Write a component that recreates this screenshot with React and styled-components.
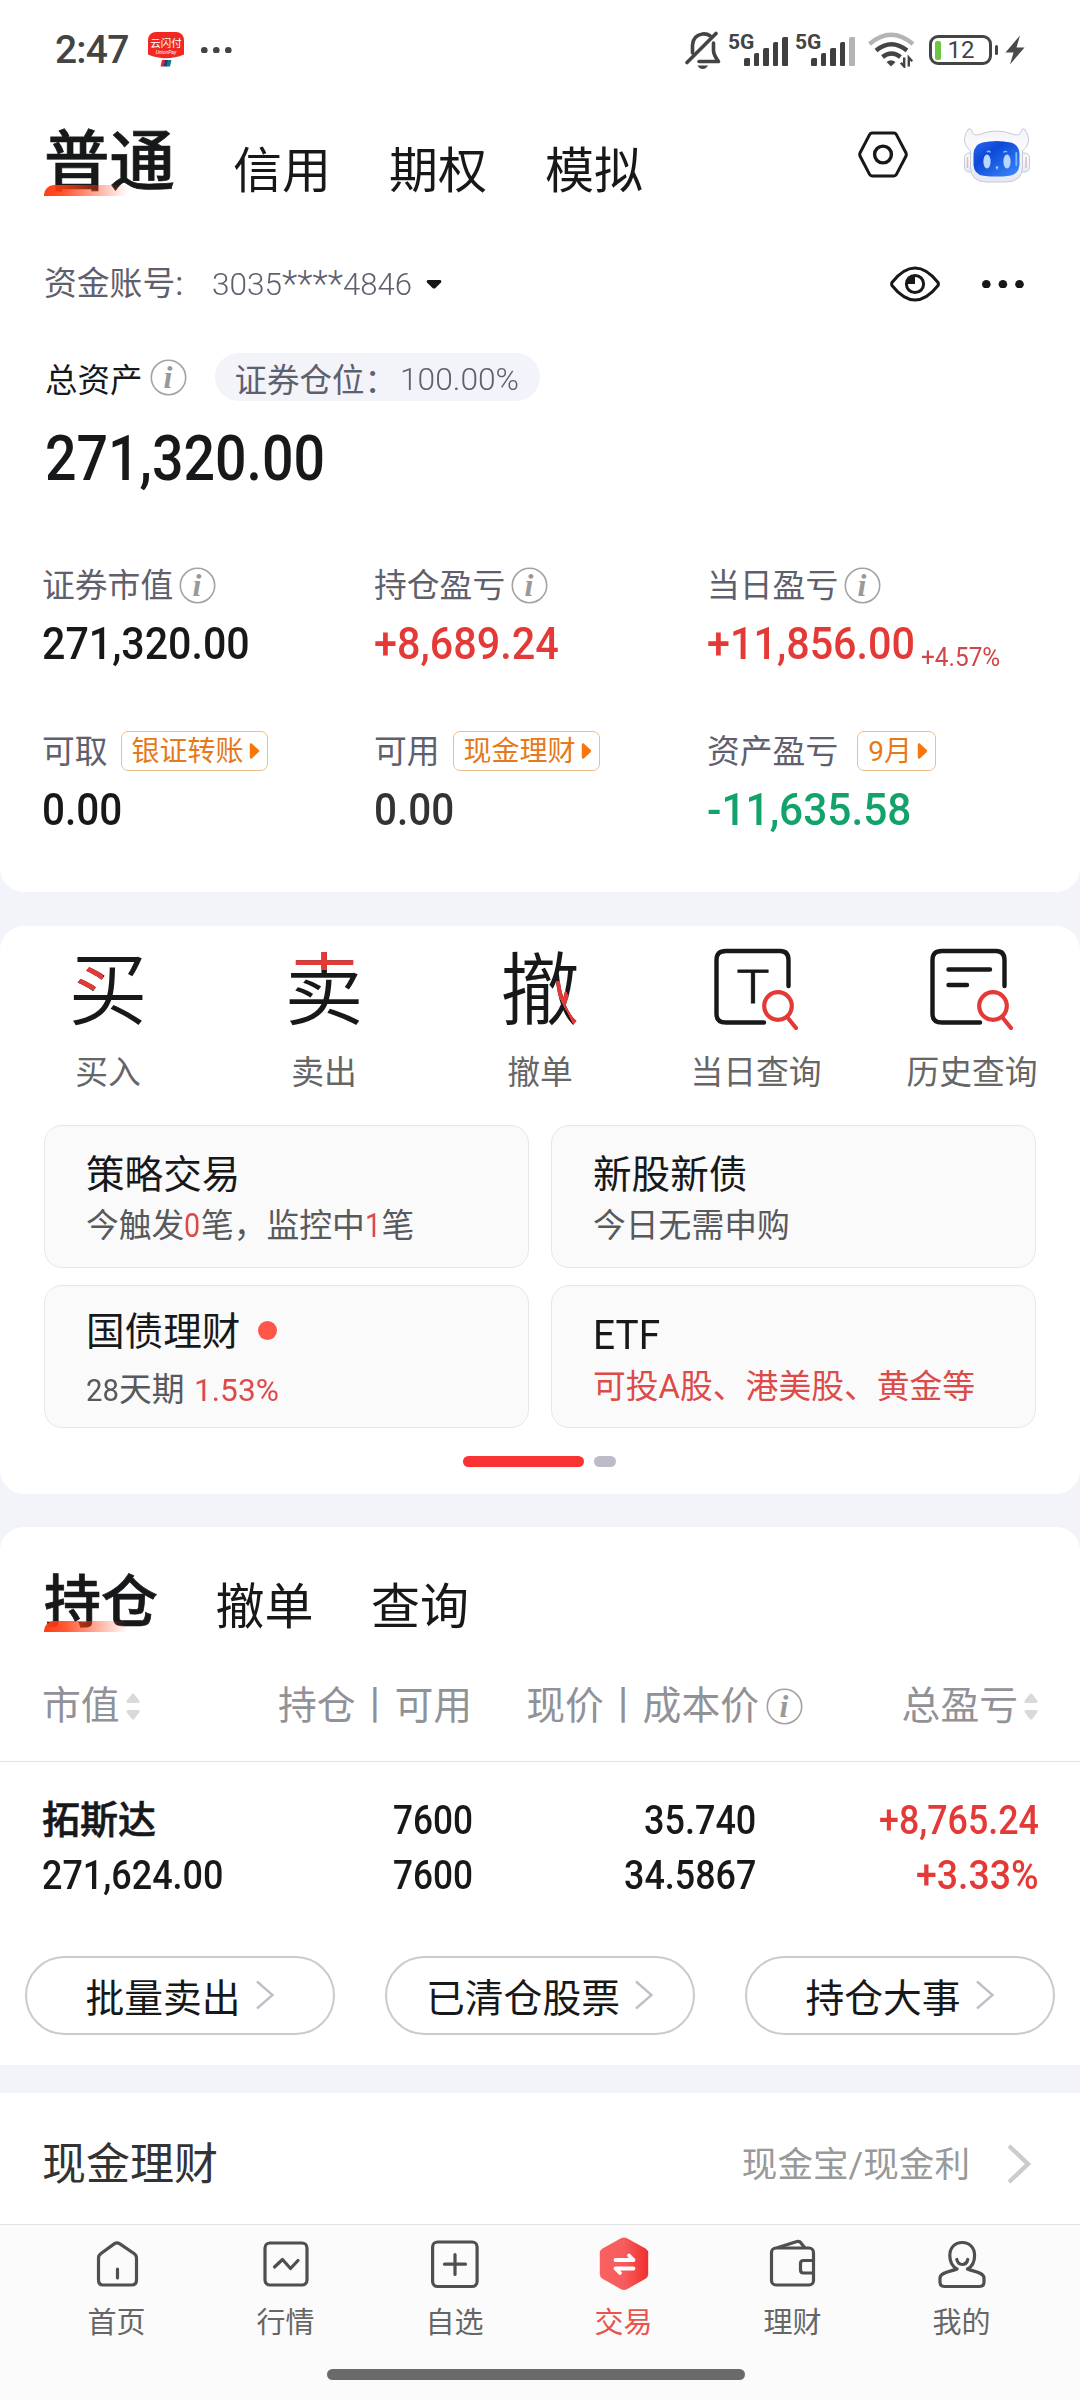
import React, { useLayoutEffect, useRef, useState } from "react";
import styled, { createGlobalStyle, css } from "styled-components";

const INK = "#17181a";
const SLATE = "#5f606e";
const RED = "#e43a37";
const GREEN = "#12a26a";
const ORANGE = "#e67a1a";

const GlobalStyle = createGlobalStyle`
  *, *::before, *::after { box-sizing: border-box; }
  body {
    margin: 0;
    background: #f3f4f9;
    font-family: Roboto, "Noto Sans CJK SC", sans-serif;
    color: ${INK};
    -webkit-font-smoothing: antialiased;
  }
  svg { display: block; flex: none; }
`;

const Screen = styled.div`
  width: 1080px;
  height: 2400px;
  overflow: hidden;
  display: flex;
  flex-direction: column;
`;

const Panel = styled.section`
  background: #fff;
  flex: none;
  height: ${(p) => p.$h}px;
  margin-top: ${(p) => p.$gap || 0}px;
  border-radius: ${(p) => p.$radius || "0"};
`;

/* ---------- condensed figures ---------- */
const FigureBox = styled.span`
  display: inline-block;
  flex: none;
  white-space: nowrap;
  font-size: ${(p) => p.$size}px;
  font-weight: ${(p) => p.$weight || 500};
  color: ${(p) => p.$color || "inherit"};
`;
const FigureInk = styled.span`
  display: inline-block;
  transform-origin: 0 50%;
`;
function Figure({ width, size, weight, color, children }) {
  const ref = useRef(null);
  const [scale, setScale] = useState(1);
  useLayoutEffect(() => {
    setScale(width / ref.current.offsetWidth);
  }, [width]);
  return (
    <FigureBox $size={size} $weight={weight} $color={color} style={{ width }}>
      <FigureInk ref={ref} style={{ transform: `scaleX(${scale})` }}>{children}</FigureInk>
    </FigureBox>
  );
}

/* ---------- status bar ---------- */
const StatusBar = styled.header`
  height: 100px;
  padding: 0 55px;
  display: flex;
  align-items: center;
  color: #444;
`;
const Clock = styled.span`
  font-size: 39px;
  font-weight: 500;
  line-height: 50px;
  width: 93px;
  letter-spacing: -0.8px;
`;
const AppBadge = styled.span`
  width: 36px;
  height: 36px;
  border-radius: 8px;
  overflow: hidden;
  flex: none;
  margin-right: 17px;
`;
const StatusIcons = styled.span`
  display: flex;
  align-items: center;
  margin-left: auto;
`;
const Signals = styled.span`
  display: flex;
  margin: 0 6px 2px 0;
`;
const SignalGroup = styled.span`
  display: flex;
  height: 34px;
  width: 67px;
`;
const NetLabel = styled.span`
  font-size: 21px;
  font-weight: 700;
  line-height: 20px;
  width: 16px;
  white-space: nowrap;
`;
const Bars = styled.span`
  display: flex;
  align-items: flex-end;
  gap: 4px;
  height: 34px;
`;
const Bar = styled.i`
  width: 5.6px;
  border-radius: 2px 1px 1px 1px;
  height: ${(p) => p.$h}px;
  background: ${(p) => (p.$dim ? "#b4b4b4" : "#3f3f3f")};
`;
const Battery = styled.span`
  width: 63px;
  height: 30px;
  border: 3px solid #444;
  border-radius: 9px;
  display: flex;
  align-items: center;
  padding-left: 3px;
  font-size: 24px;
  line-height: 24px;
  margin-left: 14px;
`;
const Charge = styled.i`
  width: 5.5px;
  height: 19px;
  border-radius: 2px;
  background: #6cc644;
  margin-right: 7px;
`;
const Knob = styled.i`
  width: 3.5px;
  height: 10px;
  border-radius: 2px;
  background: #444;
  margin: 0 7px 0 2.5px;
`;

function Signal({ dimLast }) {
  return (
    <SignalGroup>
      <NetLabel>5G</NetLabel>
      <Bars>
        {[8, 13, 18, 24, 29].map((h, i) => (
          <Bar key={h} $h={h} $dim={dimLast && i === 4} />
        ))}
      </Bars>
    </SignalGroup>
  );
}

/* ---------- tabs ---------- */
const Tabs = styled.nav`
  display: flex;
  align-items: flex-end;
  height: ${(p) => p.$h}px;
  padding: 0 48px 0 44px;
  gap: ${(p) => p.$gap}px;
`;
const Tab = styled.span`
  font-size: 49px;
  line-height: 49px;
  position: relative;
  ${(p) => p.$active && css`
    font-size: ${p.$active}px;
    line-height: ${p.$active}px;
    padding-bottom: 1px;
    font-weight: 500;
    -webkit-text-stroke: 0.7px ${INK};
    &::after {
      content: "";
      position: absolute;
      left: 0;
      bottom: 0;
      width: 84px;
      height: 11px;
      border-top-left-radius: 10px;
      background: linear-gradient(90deg, #ff3c11 0%, rgba(255, 60, 17, 0.85) 25%, rgba(255, 60, 17, 0) 100%);
    }
  `}
`;
const TabTools = styled.div`
  display: flex;
  align-items: center;
  height: 83px;
  gap: 56px;
  margin-left: auto;
`;

/* ---------- account ---------- */
const AccountRow = styled.div`
  display: flex;
  align-items: center;
  height: 60px;
  line-height: 40px;
  margin-top: 58px;
  padding: 0 56px 0 44px;
  font-size: 32.8px;
  color: ${SLATE};
`;
const AccountLabel = styled.span`
  width: 168px;
`;
const Caret = styled.span`
  margin-left: 14px;
  flex: 1;
`;
const More = styled.span`
  margin-left: 42px;
`;
const TotalRow = styled.div`
  display: flex;
  align-items: center;
  height: 48px;
  margin-top: 39px;
  padding-left: 45px;
  font-size: 32.5px;
`;
const PositionPill = styled.span`
  display: flex;
  align-items: center;
  height: 48px;
  width: 325px;
  margin-left: 28px;
  padding-left: 20px;
  border-radius: 24px;
  background: #f3f4f9;
  color: ${SLATE};
`;
const PillLabel = styled.span`
  width: 165px;
`;
const PillFigure = styled.span`
  padding-top: 3px;
`;
const TotalValue = styled.div`
  margin: 26px 0 0 45px;
  line-height: 64px;
  height: 64px;
`;
const Stats = styled.div`
  display: grid;
  grid-template-columns: 332px 333px 1fr;
  row-gap: 65px;
  margin-top: 74px;
  padding-left: 42px;
`;
const StatLabel = styled.div`
  display: flex;
  align-items: center;
  height: 40px;
  line-height: 37px;
  font-size: 32.8px;
  color: ${SLATE};
`;
const StatName = styled.span`
  padding-top: 3px;
`;
const StatValue = styled.div`
  display: flex;
  height: 46px;
  line-height: 49px;
  margin-top: 15px;
`;
const Change = styled.span`
  line-height: 75px;
  margin-left: 6px;
`;
const LinkTag = styled.span`
  display: flex;
  align-items: center;
  height: 40px;
  margin-left: ${(p) => p.$gap || 13}px;
  padding: 0 7px 0 10px;
  border: 1.5px solid #e8c08a;
  border-radius: 7px;
  color: ${ORANGE};
  font-size: 28px;
  gap: 5px;
`;
const TagText = styled.span`
  line-height: 36px;
  padding-top: 2px;
`;
const InfoHolder = styled.span`
  margin-left: ${(p) => p.$gap}px;
`;

/* ---------- actions ---------- */
const Actions = styled.div`
  display: grid;
  grid-template-columns: repeat(5, 1fr);
  padding-top: 22px;
`;
const Action = styled.div`
  display: flex;
  flex-direction: column;
  align-items: center;
`;
const ActionIcon = styled.div`
  height: 80px;
`;
const ActionLabel = styled.div`
  margin-top: 25px;
  line-height: 41px;
  height: 40px;
  font-size: 32.8px;
  color: #666;
`;
const markPaint = {
  buy: css`
    background: linear-gradient(${RED}, ${RED}) 3px 15px / 31px 27px no-repeat, linear-gradient(${INK}, ${INK});
  `,
  sell: css`
    background: linear-gradient(${RED}, ${RED}) 0 0 / 79px 22px no-repeat, linear-gradient(${INK}, ${INK});
  `,
  cancel: css`
    background: linear-gradient(to top right, transparent 38%, ${RED} 38%, ${RED} 60%, transparent 60%) 55px 33px / 24px 45px no-repeat, linear-gradient(${INK}, ${INK});
  `,
};
const Mark = styled.span`
  display: block;
  font-family: "Noto Sans CJK SC", sans-serif;
  font-weight: 350;
  font-size: 79px;
  line-height: 74px;
  height: 80px;
  ${(p) => markPaint[p.$kind]}
  -webkit-background-clip: text;
  background-clip: text;
  color: transparent;
`;

const Cards = styled.div`
  display: grid;
  grid-template-columns: 485px 485px;
  grid-auto-rows: 143px;
  gap: 17px 22px;
  margin: 32px 44px 0;
`;
const Card = styled.div`
  border: 1px solid #e6e7eb;
  border-radius: 18px;
  background: #fafafa;
  padding: ${(p) => p.$top || 26}px 0 0 41px;
`;
const CardTitle = styled.div`
  display: flex;
  align-items: center;
  font-size: 38.6px;
  line-height: 46px;
  height: 46px;
`;
const CardNote = styled.div`
  margin-top: ${(p) => p.$gap || 10}px;
  font-size: 32.8px;
  line-height: 36px;
  height: 36px;
  color: ${(p) => (p.$red ? "#dc4b48" : "#58595c")};
`;
const Rate = styled.span`
  margin-left: 9px;
`;
const Dot = styled.i`
  width: 19px;
  height: 19px;
  border-radius: 50%;
  background: #fe5649;
  margin: -3px 0 0 17.5px;
`;
const Pager = styled.div`
  display: flex;
  justify-content: center;
  gap: 10px;
  margin: 28px 2px 0 0;
`;
const Page = styled.i`
  width: ${(p) => (p.$on ? 121 : 22)}px;
  height: 11px;
  border-radius: 6px;
  background: ${(p) => (p.$on ? "#f93232" : "#bcbcc8")};
`;

/* ---------- holdings ---------- */
const tableGrid = css`
  display: grid;
  grid-template-columns: 231px 200px 330px 236px;
  padding-left: 42px;
`;
const TableHead = styled.div`
  ${tableGrid}
  height: 130px;
  padding-top: 48px;
  padding-bottom: 29px;
  border-bottom: 1.5px solid #e4e4e6;
  color: #919198;
  font-size: 38.8px;
  line-height: 48px;
`;
const Cell = styled.div`
  display: flex;
  align-items: center;
  justify-content: ${(p) => (p.$left ? "flex-start" : "flex-end")};
  padding-right: ${(p) => p.$inset || 0}px;
  white-space: nowrap;
`;
const TableLine = styled.div`
  ${tableGrid}
  height: 55px;
  line-height: 55px;
`;
const TableBody = styled.div`
  padding-top: 31px;
`;
const StockName = styled.span`
  font-size: 38px;
  font-weight: 500;
  -webkit-text-stroke: 0.6px ${INK};
`;
const SortHolder = styled.span`
  margin-left: 5px;
`;
const PillRow = styled.div`
  display: flex;
  gap: 50px;
  padding: 53px 25px 0;
`;
const PillButton = styled.button`
  flex: 1;
  height: 79px;
  border: 2px solid #cacad0;
  border-radius: 40px;
  background: #fff;
  font-family: inherit;
  font-size: 38.8px;
  line-height: 48px;
  color: ${INK};
  display: flex;
  align-items: center;
  justify-content: center;
  gap: 14px;
  padding: 6px 0 0;
  svg { margin-top: -8px; }
`;

/* ---------- cash row + bottom navigation ---------- */
const CashRow = styled.div`
  display: flex;
  align-items: center;
  height: 131px;
  line-height: 54px;
  padding: 10px 48px 0 42px;
`;
const CashTitle = styled.span`
  flex: 1;
  font-size: 44px;
  color: #333;
  padding-top: 2px;
`;
const CashNote = styled.span`
  font-size: 35.6px;
  color: #999;
  margin-right: 37px;
  padding-top: 2px;
`;
const BottomBar = styled.footer`
  flex: none;
  height: 176px;
  border-top: 1.5px solid #e3e3e3;
  background: #fbfbfb;
  display: flex;
  flex-direction: column;
  align-items: center;
`;
const NavItems = styled.div`
  display: grid;
  grid-template-columns: repeat(6, 169px);
  padding-top: 12px;
  margin-right: 2px;
`;
const NavItem = styled.div`
  display: flex;
  flex-direction: column;
  align-items: center;
  font-size: 29px;
  line-height: 34px;
  gap: 15px;
  color: ${(p) => (p.$on ? "#e8534d" : "#666")};
`;
const HomeBar = styled.div`
  width: 418px;
  height: 11px;
  border-radius: 6px;
  background: #6a6a6a;
  margin-top: 29px;
  margin-right: 8px;
`;

/* ---------- icons ---------- */
const UnionPay = () => (
  <svg width="36" height="36" viewBox="0 0 36 36">
    <path d="M0 0 H36 V22.5 Q18 30 0 22.5 Z" fill="#f02a22" />
    <text x="18" y="15" textAnchor="middle" fontSize="10.5" fill="#fff" fontFamily="Noto Sans CJK SC, sans-serif">云闪付</text>
    <text x="18" y="21.5" textAnchor="middle" fontSize="5" fontStyle="italic" fill="#fff" fontFamily="Roboto, sans-serif">UnionPay</text>
    <path d="M14 28 H17.5 L16 34.5 H12.5 Z" fill="#e0263c" />
    <path d="M17 28 H20.5 L19 34.5 H15.5 Z" fill="#1b3f78" />
    <path d="M20 28 H23.5 L22 34.5 H18.5 Z" fill="#0c7d84" />
  </svg>
);
const Dots = ({ step, r, color }) => (
  <svg width={step * 2 + r * 2} height={r * 2} fill={color}>
    <circle cx={r} cy={r} r={r} />
    <circle cx={r + step} cy={r} r={r} />
    <circle cx={r + step * 2} cy={r} r={r} />
  </svg>
);
const Mute = () => (
  <svg width="43" height="38" viewBox="0 0 43 38" fill="none" stroke="#444" strokeWidth="3.6" strokeLinecap="round">
    <path d="M2 31.5 L31 2.5" />
    <path d="M7.5 22 V14 Q8 4.5 17.5 3 Q22 2.5 25 4.8" />
    <path d="M28.5 12 V20 Q29 24.5 33.5 30.5 H14" strokeLinejoin="round" />
    <path d="M12.5 34.5 H23 Q21 38 17.7 38 Q14.5 38 12.5 34.5 Z" fill="#444" stroke="none" />
  </svg>
);
const Wifi = () => (
  <svg width="47" height="36" viewBox="0 0 47 36" fill="none" strokeWidth="4.4">
    <path d="M1.5 12 Q23 -6.5 45 12" stroke="#b4b4b4" />
    <path d="M8 18.5 Q23.5 6 39 18.5" stroke="#444" />
    <path d="M14.5 25 Q23.5 18 32.5 25" stroke="#444" />
    <path d="M18.5 30 Q23 26.5 27.5 30 L23 34.5 Z" fill="#444" />
    <path d="M36.2 25.5 V34.5 L32.8 30.8 M40.8 34.5 V25.5 L44.2 29.2" stroke="#444" strokeWidth="2.4" />
  </svg>
);
const Bolt = () => (
  <svg width="20" height="30" viewBox="0 0 20 30">
    <path d="M15 0.5 L0.5 17.5 H8.5 L5 29.5 L19.5 12.5 H11.5 Z" fill="#4a4a4a" />
  </svg>
);
const Hexagon = () => (
  <svg width="50" height="47" viewBox="0 0 50 47" fill="none" stroke={INK} strokeWidth="3">
    <path d="M14 2 H36 Q37.5 2 38.3 3.4 L48 22 Q48.6 23.5 48 25 L38.3 43.6 Q37.5 45 36 45 H14 Q12.5 45 11.7 43.6 L2 25 Q1.4 23.5 2 22 L11.7 3.4 Q12.5 2 14 2 Z" />
    <circle cx="25" cy="23.5" r="8.4" strokeWidth="3.4" />
  </svg>
);
const Robot = () => (
  <svg width="68" height="56" viewBox="1.5 0 68 56">
    <defs>
      <linearGradient id="face" x1="0" y1="0" x2="1" y2="1">
        <stop offset="0" stopColor="#2b66ee" />
        <stop offset="0.35" stopColor="#0d49d8" />
        <stop offset="1" stopColor="#3f8bff" />
      </linearGradient>
      <linearGradient id="shell" x1="0" y1="0" x2="0" y2="1">
        <stop offset="0" stopColor="#f1f2f7" />
        <stop offset="0.3" stopColor="#fbfbfe" />
        <stop offset="1" stopColor="#e4e8f3" />
      </linearGradient>
    </defs>
    <g fill="url(#shell)" stroke="#c6cad6" strokeWidth="1">
      <rect x="2" y="26" width="11" height="19" rx="4.5" />
      <rect x="56" y="26" width="11" height="19" rx="4.5" />
      <path d="M6 2 Q9 1 9.5 5 Q11 9 17 7.5 Q34 0.5 51 7.5 Q57 9 58.5 5 Q59 1 62 2 Q67.5 10 65.5 16 Q64 21 60 24 V40 Q60 54.5 44 55 H24 Q8 54.5 8 40 V24 Q4 21 2.5 16 Q0.5 10 6 2 Z" />
    </g>
    <path d="M5 30 V41 M63.5 30 V41" stroke="#e2bcbc" strokeWidth="1.6" />
    <path d="M20 15.5 Q34 12.5 48 15.5 Q56.5 17.5 57 27 V38 Q56 47.5 47 48.7 Q34 50.5 21 48.7 Q11.5 47.5 11 38 V27 Q11.5 17.5 20 15.5 Z" fill="url(#face)" />
    <g fill="#b9d8ff">
      <ellipse cx="24.5" cy="34.5" rx="3.6" ry="7" />
      <ellipse cx="44.5" cy="34.5" rx="3.6" ry="7" />
      <path d="M33 39.5 H36 L34.5 43 Z" />
    </g>
    <path d="M24.5 25 q2 -1.5 3.5 0.5 M41 25.5 q1.5 -2 3.5 -0.5" stroke="#8fbcff" strokeWidth="1.4" fill="none" />
    <path d="M53.8 26 V38" stroke="#7fb4ff" strokeWidth="1.8" strokeLinecap="round" />
  </svg>
);
const CaretIcon = () => (
  <svg width="16" height="10" viewBox="0 0 16 10">
    <path d="M2 1 H14 Q16 1.5 15 3.5 L9.5 9 Q8 10 6.5 9 L1 3.5 Q0 1.5 2 1 Z" fill={INK} />
  </svg>
);
const Eye = () => (
  <svg width="50" height="36" viewBox="0 0 50 36" fill="none" stroke={INK} strokeWidth="3">
    <path d="M2.2 16.2 Q13.5 2 25 2 Q36.5 2 47.8 16.2 Q49 18 47.8 19.8 Q36.5 34 25 34 Q13.5 34 2.2 19.8 Q1 18 2.2 16.2 Z" />
    <circle cx="25" cy="18" r="8.6" />
    <path d="M25 9 V18 H16 Q16.5 10 25 9 Z" fill={INK} stroke="none" />
  </svg>
);
const Info = ({ gap = 8 }) => (
  <InfoHolder $gap={gap}>
    <svg width="37" height="37" viewBox="0 0 37 37">
      <circle cx="18.5" cy="18.5" r="17.2" fill="none" stroke="#a3a3a3" strokeWidth="1.6" />
      <text x="18" y="29" textAnchor="middle" fontFamily="Liberation Serif, serif" fontStyle="italic" fontWeight="700" fontSize="32" fill="#999">i</text>
    </svg>
  </InfoHolder>
);
const TagArrow = () => (
  <svg width="11" height="18" viewBox="0 0 11 18">
    <path d="M2 2.5 L9 9 L2 15.5 Z" fill="#f9760b" stroke="#f9760b" strokeWidth="2.4" strokeLinejoin="round" />
  </svg>
);
const Sort = () => (
  <SortHolder>
    <svg width="16" height="28" viewBox="0 0 16 28">
      <path d="M8 3 L13 9.5 H3 Z M8 26 L13 19.5 H3 Z" fill="#d9d9d9" stroke="#d9d9d9" strokeWidth="3" strokeLinejoin="round" />
    </svg>
  </SortHolder>
);
const PillChevron = () => (
  <svg width="20" height="30" viewBox="0 0 20 30" fill="none" stroke="#bfbfca" strokeWidth="2.4">
    <path d="M2 1.5 L17.5 15 L2 28.5" />
  </svg>
);
const CashChevron = () => (
  <svg width="25" height="40" viewBox="0 0 25 40" fill="none" stroke="#ccc" strokeWidth="4.4">
    <path d="M2 2 L21 20 L2 38" />
  </svg>
);
const Lens = ({ x }) => (
  <g stroke={RED} strokeWidth="4.2" fill="none" strokeLinecap="round">
    <circle cx={x} cy="58" r="13.8" />
    <path d={`M${x + 9.5} 69.5 L${x + 18} 80`} />
  </g>
);
const SHEET = "M50 74.5 H12 Q2.5 74.5 2.5 66 V12 Q2.5 3 12 3 H66 Q74.5 3 74.5 12 V38";
const TodayIcon = () => (
  <svg width="84" height="82" viewBox="0 0 84 82" fill="none" stroke={INK} strokeWidth="4.4" strokeLinecap="round">
    <path d={SHEET} />
    <text x="39" y="54.5" textAnchor="middle" fontFamily="Roboto, sans-serif" fontWeight="300" fontSize="47" textLength="33" lengthAdjust="spacingAndGlyphs" fill={INK} stroke={INK} strokeWidth="0.8">T</text>
    <Lens x={64} />
  </svg>
);
const HistoryIcon = () => (
  <svg width="84" height="82" viewBox="0 0 84 82" fill="none" stroke={INK} strokeWidth="4.4" strokeLinecap="round">
    <path d={SHEET} />
    <path d="M18.5 21.5 H60 M18.5 37 H37" />
    <Lens x={63} />
  </svg>
);

const navIcon = { width: 54, height: 54, viewBox: "0 0 54 54", fill: "none", stroke: "#4f4f4f", strokeWidth: 3.2, strokeLinecap: "round", strokeLinejoin: "round" };
const HomeIcon = () => (
  <svg {...navIcon}>
    <path d="M24.5 6.6 Q27 5 29.5 6.6 L44 16.5 Q46.5 18.3 46.5 21 V43 Q46.5 48 41.5 48 H13 Q8.5 48 8.5 43 V21 Q8.5 18.3 11 16.5 Z" />
    <path d="M27.5 32 V41" />
  </svg>
);
const ChartIcon = () => (
  <svg {...navIcon}>
    <rect x="6" y="6" width="42" height="42" rx="5" />
    <path d="M15.5 30 L23.5 22.5 L31.5 31.5 L39 23.5" />
  </svg>
);
const PlusIcon = () => (
  <svg {...navIcon}>
    <rect x="4.6" y="5" width="44.5" height="44.5" rx="5" />
    <path d="M27 17.5 V37.5 M16.5 27.2 H37.5" />
  </svg>
);
const TradeIcon = () => (
  <svg width="54" height="54" viewBox="0 0 54 54">
    <defs>
      <linearGradient id="trade" x1="0" x2="1">
        <stop offset="0" stopColor="#fb6161" />
        <stop offset="0.5" stopColor="#f85c5c" />
        <stop offset="1" stopColor="#ef2f2f" />
      </linearGradient>
    </defs>
    <path d="M24 1.2 Q27 -0.2 30 1.2 L48.5 11.6 Q51.2 13.2 51.2 16.4 V37 Q51.2 40.2 48.5 41.8 L30 52.2 Q27 53.6 24 52.2 L5.5 41.8 Q2.8 40.2 2.8 37 V16.4 Q2.8 13.2 5.5 11.6 Z" fill="url(#trade)" />
    <path d="M18.5 23 H36.5 L32 18.5 M36.5 31.5 H18.5 L23 36" fill="none" stroke="#fff" strokeWidth="3.8" strokeLinecap="round" strokeLinejoin="round" />
  </svg>
);
const WalletIcon = () => (
  <svg {...navIcon}>
    <rect x="5.5" y="11" width="42" height="37" rx="4.5" />
    <path d="M12 10.5 L31 4.5 Q33.5 3.8 35 6 L38.5 10.5" />
    <path d="M47 23.5 H37.5 Q34.5 23.5 34.5 26.5 V33 Q34.5 36 37.5 36 H47" />
  </svg>
);
const PersonIcon = () => (
  <svg {...navIcon}>
    <path d="M22 32 C16.5 29 14.8 24 14.8 18.5 C14.8 10.5 20 5.5 27.2 5.5 C34.5 5.5 39.6 10.5 39.6 18.5 C39.6 24 38 29 32.5 32 C38 34.5 49 35 49 41 V45 Q49 49.5 44.5 49.5 H9.5 Q5 49.5 5 45 V41 C5 35 16.5 34.5 22 32 Z" />
    <path d="M21.8 22.5 Q23 27.5 27.3 27.5 Q31.5 27.5 32.8 22.5" />
  </svg>
);

const ACTIONS = [
  ["买入", <Mark $kind="buy">买</Mark>],
  ["卖出", <Mark $kind="sell">卖</Mark>],
  ["撤单", <Mark $kind="cancel">撤</Mark>],
  ["当日查询", <TodayIcon />],
  ["历史查询", <HistoryIcon />],
];
const NAV = [
  ["首页", HomeIcon],
  ["行情", ChartIcon],
  ["自选", PlusIcon],
  ["交易", TradeIcon],
  ["理财", WalletIcon],
  ["我的", PersonIcon],
];

const Stat = ({ label, tag, tagGap, children }) => (
  <div>
    <StatLabel>
      <StatName>{label}</StatName>
      {tag ? <LinkTag $gap={tagGap}><TagText>{tag}</TagText><TagArrow /></LinkTag> : <Info gap={6} />}
    </StatLabel>
    <StatValue>{children}</StatValue>
  </div>
);
const Count = ({ children }) => (
  <Figure width={16.5} size={33} weight={400} color="#dc4b48">{children}</Figure>
);

export default function App() {
  return (
    <Screen>
      <GlobalStyle />

      <Panel $h={892} $radius="0 0 24px 24px">
        <StatusBar>
          <Clock>2:47</Clock>
          <AppBadge><UnionPay /></AppBadge>
          <Dots step={12} r={3.3} color="#444" />
          <StatusIcons>
            <Mute />
            <Signals>
              <Signal />
              <Signal dimLast />
            </Signals>
            <Wifi />
            <Battery><Charge />12</Battery>
            <Knob />
            <Bolt />
          </StatusIcons>
        </StatusBar>

        <Tabs $h={96} $gap={58}>
          <Tab $active={65.5}>普通</Tab>
          <Tab>信用</Tab>
          <Tab>期权</Tab>
          <Tab>模拟</Tab>
          <TabTools>
            <Hexagon />
            <Robot />
          </TabTools>
        </Tabs>

        <AccountRow>
          <AccountLabel>资金账号:</AccountLabel>
          <Figure width={70} size={32} weight={300}>3035</Figure>
          <Figure width={61} size={36} weight={300}>****</Figure>
          <Figure width={69} size={32} weight={300}>4846</Figure>
          <Caret><CaretIcon /></Caret>
          <Eye />
          <More><Dots step={16.6} r={4.3} color={INK} /></More>
        </AccountRow>

        <TotalRow>
          总资产
          <Info gap={7} />
          <PositionPill>
            <PillLabel>证券仓位：</PillLabel>
            <PillFigure><Figure width={119} size={32} weight={300}>100.00%</Figure></PillFigure>
          </PositionPill>
        </TotalRow>
        <TotalValue>
          <Figure width={280} size={63}>271,320.00</Figure>
        </TotalValue>

        <Stats>
          <Stat label="证券市值"><Figure width={208} size={44.5}>271,320.00</Figure></Stat>
          <Stat label="持仓盈亏"><Figure width={185} size={44.5} color={RED}>+8,689.24</Figure></Stat>
          <Stat label="当日盈亏">
            <Figure width={208} size={44.5} color={RED}>+11,856.00</Figure>
            <Change><Figure width={79} size={25} weight={400} color="#d04545">+4.57%</Figure></Change>
          </Stat>
          <Stat label="可取" tag="银证转账"><Figure width={80} size={44.5}>0.00</Figure></Stat>
          <Stat label="可用" tag="现金理财"><Figure width={80} size={44.5} color="#333">0.00</Figure></Stat>
          <Stat label="资产盈亏" tag="9月" tagGap={19}><Figure width={204} size={44.5} color={GREEN}>-11,635.58</Figure></Stat>
        </Stats>
      </Panel>

      <Panel $h={568} $gap={34} $radius="24px">
        <Actions>
          {ACTIONS.map(([label, icon]) => (
            <Action key={label}>
              <ActionIcon>{icon}</ActionIcon>
              <ActionLabel>{label}</ActionLabel>
            </Action>
          ))}
        </Actions>
        <Cards>
          <Card>
            <CardTitle>策略交易</CardTitle>
            <CardNote>今触发<Count>0</Count>笔，监控中<Count>1</Count>笔</CardNote>
          </Card>
          <Card>
            <CardTitle>新股新债</CardTitle>
            <CardNote>今日无需申购</CardNote>
          </Card>
          <Card $top={23}>
            <CardTitle>国债理财<Dot /></CardTitle>
            <CardNote $gap={17}>
              <Figure width={33} size={32} weight={400}>28</Figure>天期
              <Rate><Figure width={85} size={32} weight={400} color="#dc4b48">1.53%</Figure></Rate>
            </CardNote>
          </Card>
          <Card $top={27}>
            <CardTitle><Figure width={67} size={40} weight={400}>ETF</Figure></CardTitle>
            <CardNote $red $gap={10}>可投A股、港美股、黄金等</CardNote>
          </Card>
        </Cards>
        <Pager>
          <Page $on />
          <Page />
        </Pager>
      </Panel>

      <Panel $h={538} $gap={33} $radius="24px 24px 0 0">
        <Tabs $h={105} $gap={57.5}>
          <Tab $active={57}>持仓</Tab>
          <Tab>撤单</Tab>
          <Tab>查询</Tab>
        </Tabs>
        <TableHead>
          <Cell $left>市值<Sort /></Cell>
          <Cell $inset={1}>持仓丨可用</Cell>
          <Cell>现价丨成本价<Info gap={7} /></Cell>
          <Cell>总盈亏<Sort /></Cell>
        </TableHead>
        <TableBody>
          <TableLine>
            <Cell $left><StockName>拓斯达</StockName></Cell>
            <Cell><Figure width={80} size={40.5}>7600</Figure></Cell>
            <Cell $inset={47}><Figure width={112} size={40.5}>35.740</Figure></Cell>
            <Cell><Figure width={160} size={40.5} color={RED}>+8,765.24</Figure></Cell>
          </TableLine>
          <TableLine>
            <Cell $left><Figure width={181} size={40.5}>271,624.00</Figure></Cell>
            <Cell><Figure width={80} size={40.5}>7600</Figure></Cell>
            <Cell $inset={47}><Figure width={132} size={40.5}>34.5867</Figure></Cell>
            <Cell><Figure width={123} size={40.5} color={RED}>+3.33%</Figure></Cell>
          </TableLine>
        </TableBody>
        <PillRow>
          <PillButton>批量卖出<PillChevron /></PillButton>
          <PillButton>已清仓股票<PillChevron /></PillButton>
          <PillButton>持仓大事<PillChevron /></PillButton>
        </PillRow>
      </Panel>

      <Panel $h={131} $gap={28}>
        <CashRow>
          <CashTitle>现金理财</CashTitle>
          <CashNote>现金宝/现金利</CashNote>
          <CashChevron />
        </CashRow>
      </Panel>

      <BottomBar>
        <NavItems>
          {NAV.map(([label, Icon]) => (
            <NavItem key={label} $on={label === "交易"}>
              <Icon />
              {label}
            </NavItem>
          ))}
        </NavItems>
        <HomeBar />
      </BottomBar>
    </Screen>
  );
}
